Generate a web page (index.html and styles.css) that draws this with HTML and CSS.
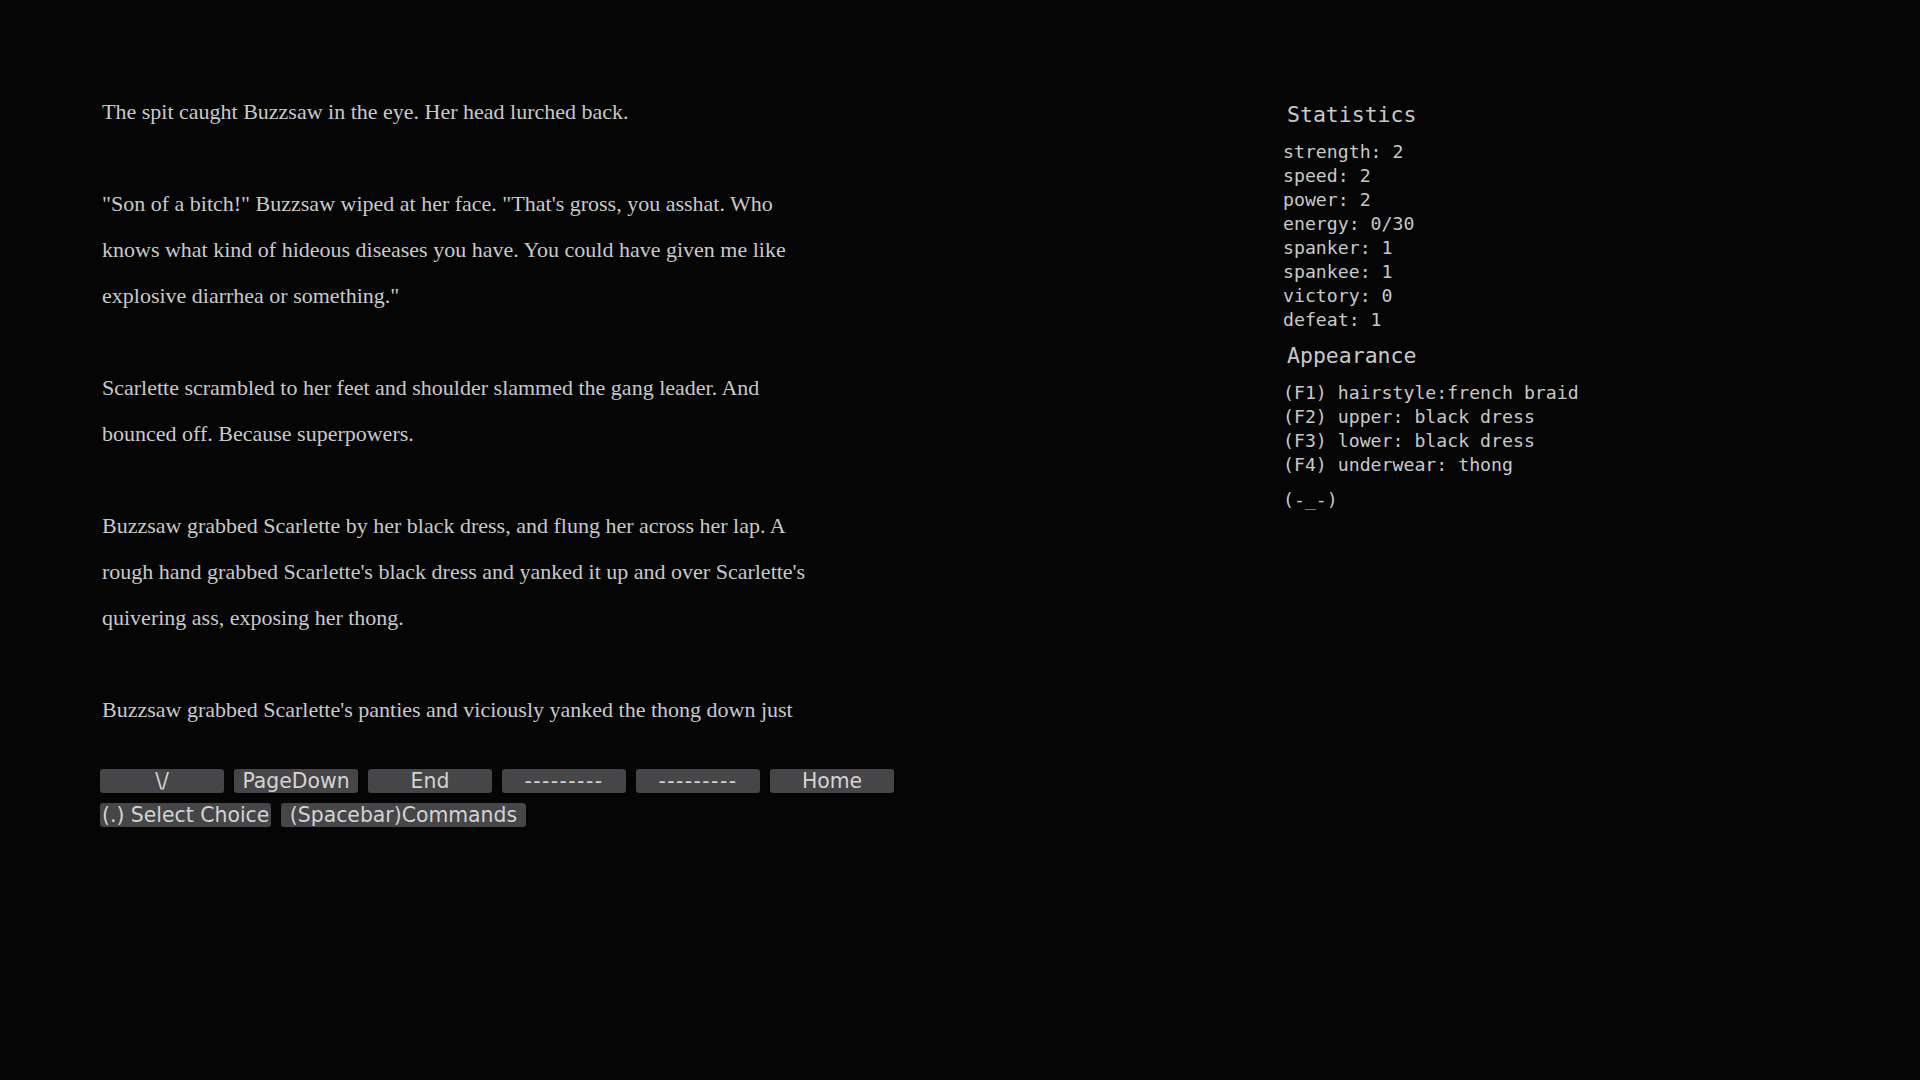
FILE: index.html
```html
<!DOCTYPE html>
<html>
<head>
    <title>Story</title>
    <link rel="stylesheet" href="styles.css">
</head>
<body>
    <div id="screen">
        <div id="leftside">
            <div id="storybox">
                <p class="storyline">The spit caught Buzzsaw in the eye. Her head lurched back.</p>
                <p class="storyline">"Son of a bitch!" Buzzsaw wiped at her face. "That's gross, you asshat. Who knows what kind of hideous diseases you have. You could have given me like explosive diarrhea or something."</p>
                <p class="storyline">Scarlette scrambled to her feet and shoulder slammed the gang leader. And bounced off. Because superpowers.</p>
                <p class="storyline">Buzzsaw grabbed Scarlette by her black dress, and flung her across her lap. A rough hand grabbed Scarlette's black dress and yanked it up and over Scarlette's quivering ass, exposing her thong.</p>
                <p class="storyline">Buzzsaw grabbed Scarlette's panties and viciously yanked the thong down just</p>
            </div>
            <div id="keyrow">
                <button class="keybut wide">\/</button>
                <button class="keybut wide">PageDown</button>
                <button class="keybut wide">End</button>
                <button class="keybut wide dashes">---------</button>
                <button class="keybut wide dashes">---------</button>
                <button class="keybut wide">Home</button>
            </div>
            <div id="keyrow2">
                <button class="keybut">(.) Select Choice</button>
                <button class="keybut">&nbsp;(Spacebar)Commands&nbsp;</button>
            </div>
        </div>
        <div id="sidebar">
            <h2 class="sidehead">Statistics</h2>
            <div class="sidelist">
                <div>strength: 2</div>
                <div>speed: 2</div>
                <div>power: 2</div>
                <div>energy: 0/30</div>
                <div>spanker: 1</div>
                <div>spankee: 1</div>
                <div>victory: 0</div>
                <div>defeat: 1</div>
            </div>
            <h2 class="sidehead">Appearance</h2>
            <div class="sidelist">
                <div>(F1) hairstyle:french braid</div>
                <div>(F2) upper: black dress</div>
                <div>(F3) lower: black dress</div>
                <div>(F4) underwear: thong</div>
            </div>
            <div id="face">(-_-)</div>
        </div>
    </div>
</body>
</html>
```
FILE: styles.css
```css
body{
    margin: 0;
    padding: 0;
    background-color: #050505;
    color: #c9c9c9;
}

#screen{
    display: flex;
    height: 1080px;
}
#leftside{
    margin-left: 102px;
    padding-top: 89px;
    width: 800px;
}
#storybox{
    width: 715px;
    height: 680px;
    overflow: hidden;
}
.storyline{
    margin: 0 0 46px 0;
    font-family: "Liberation Serif", serif;
    font-size: 22px;
    line-height: 46px;
}
#keyrow, #keyrow2{
    display: flex;
    gap: 10px;
    margin-left: -2px;
}
#keyrow2{
    margin-top: 10px;
}
.keybut{
    height: 24px;
    padding: 0 2px;
    border: none;
    border-radius: 3px;
    background-color: #464548;
    color: #d4d4d4;
    font-family: "DejaVu Sans", sans-serif;
    font-size: 20.4px;
    line-height: 24px;
    white-space: nowrap;
}
.keybut.wide{
    width: 124px;
}
.keybut.dashes{
    letter-spacing: 1.4px;
}
#sidebar{
    margin-left: 381px;
    padding-top: 101px;
    font-family: "DejaVu Sans Mono", monospace;
}
.sidehead{
    margin: 0 0 11px 4px;
    font-size: 21.5px;
    font-weight: normal;
    line-height: 28px;
}
.sidelist{
    font-size: 18.2px;
    line-height: 24px;
    margin-bottom: 10px;
}
#face{
    margin-top: 11px;
    font-size: 18.2px;
    line-height: 24px;
}
```
